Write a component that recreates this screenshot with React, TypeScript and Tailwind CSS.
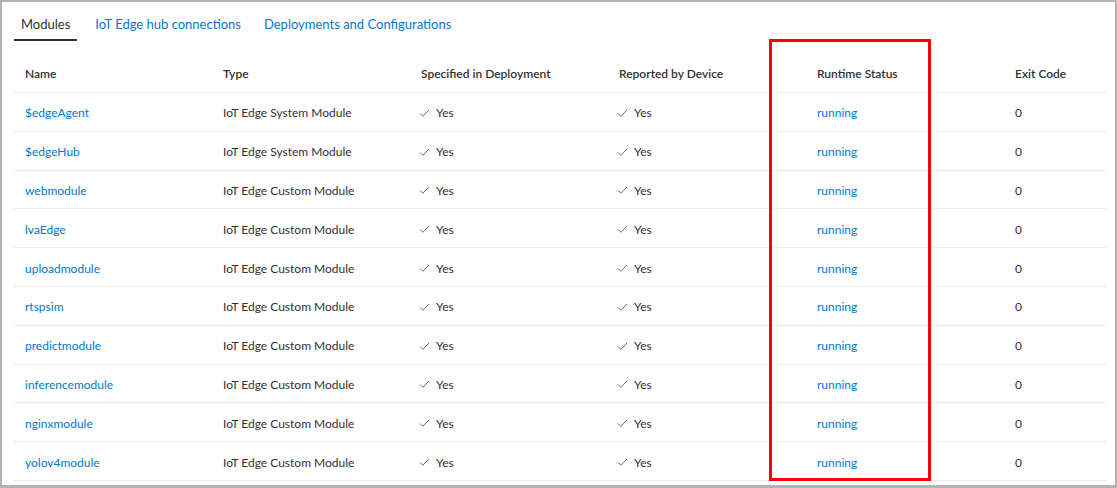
const modules = [
  { name: "$edgeAgent", type: "IoT Edge System Module" },
  { name: "$edgeHub", type: "IoT Edge System Module" },
  { name: "webmodule", type: "IoT Edge Custom Module" },
  { name: "lvaEdge", type: "IoT Edge Custom Module" },
  { name: "uploadmodule", type: "IoT Edge Custom Module" },
  { name: "rtspsim", type: "IoT Edge Custom Module" },
  { name: "predictmodule", type: "IoT Edge Custom Module" },
  { name: "inferencemodule", type: "IoT Edge Custom Module" },
  { name: "nginxmodule", type: "IoT Edge Custom Module" },
  { name: "yolov4module", type: "IoT Edge Custom Module" },
];

const headers = [
  "Name",
  "Type",
  "Specified in Deployment",
  "Reported by Device",
  "Runtime Status",
  "Exit Code",
];

const Check = () => (
  <svg width="11" height="9" viewBox="0 0 11 9" className="mr-[6px]">
    <path d="M1 4.5 L3.8 7.3 L10 1" fill="none" stroke="#605e5c" strokeWidth="0.9" />
  </svg>
);

const Yes = () => (
  <div className="flex items-center">
    <Check />
    <span>Yes</span>
  </div>
);

const App = () => {
  return (
    <div
      className="relative w-[1117px] h-[488px] bg-white border-l-2 border-t-2 border-r-2 border-b-[3px] border-[#b3b3b3] overflow-hidden text-[#323130]"
      style={{ fontFamily: '"Segoe UI", Lato, sans-serif' }}
    >
      {/* tabs */}
      <div className="flex pl-3 pt-[8px] text-[13px] h-[37px]">
        <div className="px-[7px] border-b-2 border-[#323130] h-[31px] pt-[5px]">Modules</div>
        <div className="ml-[10px] px-2 text-[#0078d4] h-[31px] pt-[5px]">IoT Edge hub connections</div>
        <div className="ml-[7px] px-2 text-[#0078d4] h-[31px] pt-[5px]">Deployments and Configurations</div>
      </div>

      {/* table */}
      <div className="ml-3 mr-[9px] mt-[17px] text-[12px]">
        <div className="grid grid-cols-[198px_198px_198px_198px_198px_1fr] h-[37px] pb-[1px] items-center border-b border-[#edebe9] font-semibold">
          {headers.map((h) => (
            <div key={h} className="pl-[11px]">{h}</div>
          ))}
        </div>
        {modules.map((m) => (
          <div
            key={m.name}
            className="grid grid-cols-[198px_198px_198px_198px_198px_1fr] h-[38.8px] items-center border-b border-[#edebe9] pt-[3px]"
          >
            <div className="pl-[11px] text-[#0078d4]">{m.name}</div>
            <div className="pl-[11px]">{m.type}</div>
            <div className="pl-[9px]"><Yes /></div>
            <div className="pl-[9px]"><Yes /></div>
            <div className="pl-[11px] text-[#0078d4]">running</div>
            <div className="pl-[11px]">0</div>
          </div>
        ))}
      </div>

      {/* highlight annotation */}
      <div className="absolute left-[767px] top-[37px] w-[162px] h-[442px] border-[3px] border-[#ff0000]" />
    </div>
  );
};

export default App;
